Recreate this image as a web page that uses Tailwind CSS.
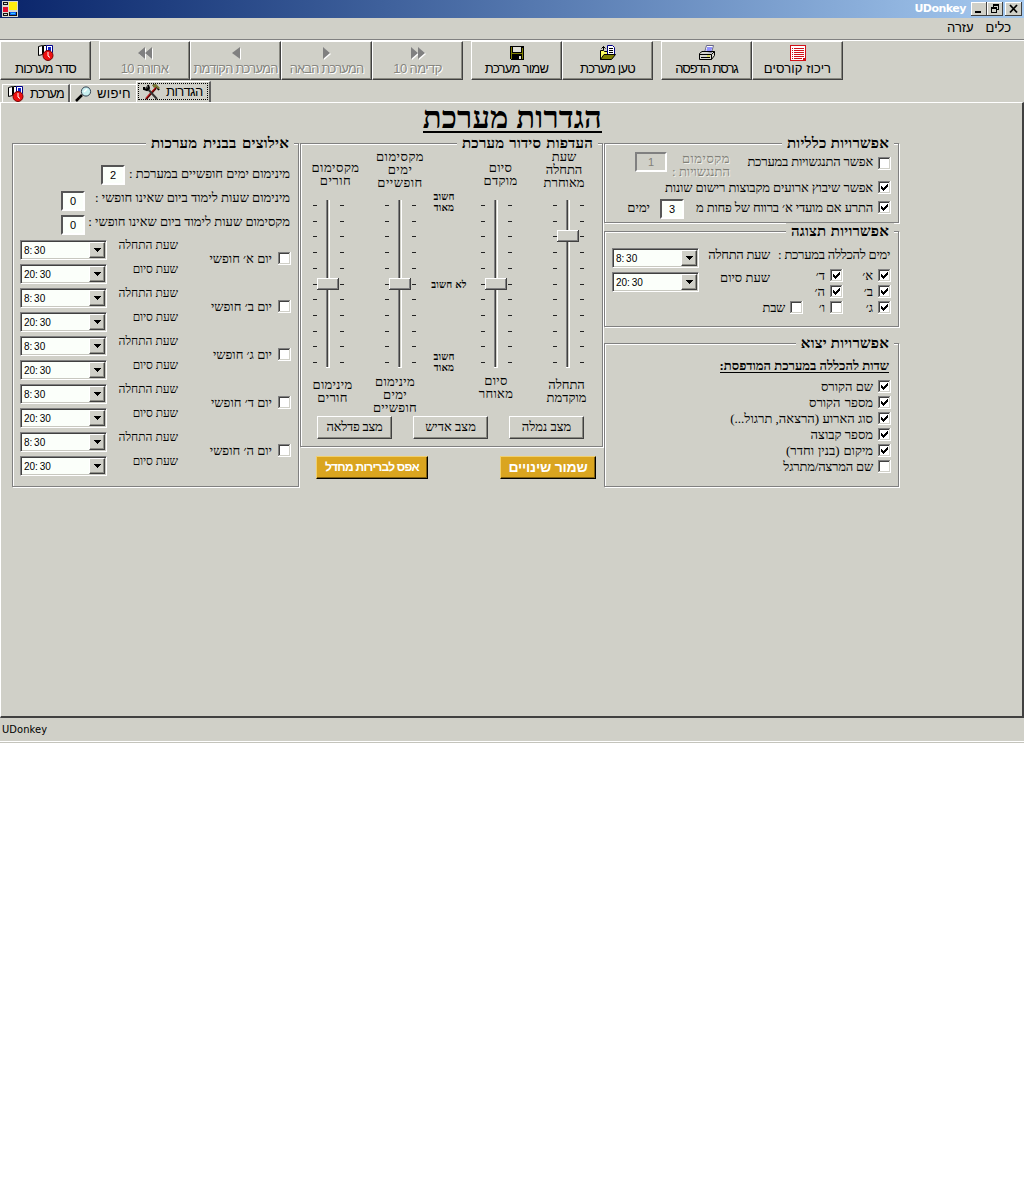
<!DOCTYPE html>
<html lang="he">
<head>
<meta charset="utf-8">
<title>UDonkey</title>
<script src="https://cdn.jsdelivr.net/npm/@tailwindcss/browser@4"></script>
<script>
// Drop-down list: <x-combo v="8:30">
customElements.define('x-combo', class extends HTMLElement {
  connectedCallback() {
    this.classList.add('block', 'shrink-0', 'w-[87px]', 'h-5');
    this.innerHTML = `<div dir="ltr" class="flex w-full h-full border border-t-[#808080] border-l-[#808080] border-b-white border-r-white bg-[#fbfffa] shadow-[inset_1px_1px_0_#404040,inset_-1px_-1px_0_#c8c8c0] p-[1px] pl-[3px] font-['Liberation_Sans'] text-[10px] leading-[17px] text-black">
      <span class="flex-1 [word-spacing:-1px]">${this.getAttribute('v')}</span>
      <span class="flex w-4 h-4 items-center justify-center bg-[#d0d0c8] border border-t-white border-l-white border-b-[#404040] border-r-[#404040] shadow-[inset_-1px_-1px_0_#909088]"><svg class="w-[7px] h-1" viewBox="0 0 7 4" shape-rendering="crispEdges"><path d="M0 0h7v1H6v1H5v1H4v1H3V3H2V2H1V1H0z"/></svg></span></div>`;
  }
});
// Check box: <x-check on>
customElements.define('x-check', class extends HTMLElement {
  connectedCallback() {
    this.classList.add('block', 'shrink-0', 'w-[13px]', 'h-[13px]');
    this.innerHTML = `<svg class="block w-[13px] h-[13px]" viewBox="0 0 13 13" shape-rendering="crispEdges"><path fill="#fff" d="M0 0h13v13H0z"/><path fill="#808080" d="M0 0h12v1H1v11H0z"/><path fill="#404040" d="M1 1h10v1H2v9H1z"/><path fill="#d0d0c8" d="M11 1h1v11H1v-1h10z"/>${this.hasAttribute('on') ? '<path d="M3 5h1v1h1v1h1V6h1V5h1V4h1V3h1v3H9v1H8v1H7v1H6v1H5V9H4V8H3z"/>' : ''}</svg>`;
  }
});
// Vertical slider: <x-slider pos="5">, pos counts tick marks from the top
customElements.define('x-slider', class extends HTMLElement {
  connectedCallback() {
    const y = n => Math.round(5 + n * 15.7);
    let ticks = '';
    for (let i = 0; i < 11; i++) ticks += `M1 ${y(i)}h4v1h-4zM28 ${y(i)}h4v1h-4z`;
    const t = y(+this.getAttribute('pos')) - 6;
    this.innerHTML = `<svg class="block w-[33px] h-[168px]" viewBox="0 0 33 168" shape-rendering="crispEdges"><path fill="#222" d="${ticks}"/><path fill="#808080" d="M14 0h1v167h-1z"/><path fill="#404040" d="M15 0h1v167h-1z"/><path fill="#fff" d="M17 0h1v168h-4v-1h3z"/><path fill="#404040" d="M5 ${t}h22v12H5z"/><path fill="#fff" d="M5 ${t}h21v11H5z"/><path fill="#808080" d="M6 ${t + 1}h20v10H6z"/><path fill="#d0d0c8" d="M6 ${t + 1}h19v9H6z"/></svg>`;
  }
});
</script>
</head>
<body class="bg-white">
<svg class="hidden">
  <symbol id="timetable" viewBox="0 0 16 16"><path fill="#fff" stroke="#000" d="M.5 1.500 4.500.5v9l-4 1zM5.500.5h3v8h-3z"/><path fill="#fff" stroke="#008" d="M8.500.5h6v7h-6z"/><path fill="#12c" d="M10 2h3v4h-3z"/><circle cx="10" cy="10.500" r="5" fill="#f01010" stroke="#700"/><path d="M10 7v4l2 1.500" fill="none" stroke="#fff"/></symbol>
</svg>
<div class="flex flex-col w-[1024px] h-[743px] bg-[#d0d0c8] text-black overflow-hidden font-['Liberation_Serif',serif]">
  <header class="flex h-[18px] shrink-0 items-center justify-between bg-linear-to-r from-[#0a246a] to-[#a6caf0] pl-[2px] pr-[2px]">
    <svg class="w-4 h-4" viewBox="0 0 16 16" shape-rendering="crispEdges"><path fill="#d8d8d0" d="M0 0h16v16H0z"/><path fill="#111" d="M1 1h5v3H1zM1 12h5v3H1zM7 11h8v4H7z"/><path fill="#d8d8d0" d="M2 2h3v1H2zM2 13h3v1H2z"/><path fill="#e01030" d="M1 6h5v5H1z"/><path fill="#ffee10" d="M7 1h8v8H7z"/><path fill="#1060f0" d="M8 11h6v3H8z"/><path fill="#30d0ff" d="M9 12h4v1H9z"/></svg>
    <div class="flex items-center">
      <span class="mr-[5px] text-[11px] font-bold text-white font-['DejaVu_Sans'] tracking-[-0.5px]">UDonkey</span>
      <svg class="w-[51px] h-[14px]" viewBox="0 0 51 14" shape-rendering="crispEdges"><path fill="#404040" d="M0 0h16v14H0zM16 0h16v14H16zM34 0h17v14H34z"/><path fill="#fff" d="M0 0h15v13H0zM16 0h15v13H16zM34 0h16v13H34z"/><path fill="#d0d0c8" d="M1 1h14v12H1zM17 1h14v12H17zM35 1h15v12H35z"/><path d="M4 9h6v2H4zM22 2h6v6h-2V7h1V4h-4v1h-1zM20 5h6v6h-6z"/><path fill="#d0d0c8" d="M21 7h4v3h-4z"/><path stroke="#000" stroke-width="1.800" shape-rendering="auto" d="m39 3 7 7.500M46 3l-7 7.500"/></svg>
    </div>
  </header>
  <nav dir="rtl" class="flex h-[22px] shrink-0 items-center gap-3 border-b border-[#808080] pr-[13px] pb-px text-[13px] font-['Liberation_Sans']">
    <span>כלים</span><span>עזרה</span>
  </nav>
  <div class="flex h-[41px] shrink-0 border-t border-white font-['Liberation_Sans'] text-[13px] leading-4 [&>button]:flex [&>button]:flex-col [&>button]:items-center [&>button]:w-[91px] [&>button]:h-[39px] [&>button]:pt-[3px] [&>button]:border [&>button]:border-t-white [&>button]:border-l-white [&>button]:border-b-[#404040] [&>button]:border-r-[#404040] [&>button]:shadow-[inset_-1px_-1px_0_#888880] [&>button]:whitespace-nowrap [&_svg]:w-4 [&_svg]:h-4">
    <button><svg><use href="#timetable"/></svg><span class="tracking-[-0.75px]">סדר מערכות</span></button>
    <button class="ml-2 text-[#85857f] [text-shadow:1px_1px_0_#fff]"><svg viewBox="0 0 16 16" fill="#808080"><path fill="#fff" d="M9 3v12L2 9zM16 3v12L9 9z"/><path d="M8 2v12L1 8zM15 2v12L8 8z"/></svg><span dir="rtl" class="tracking-[-0.7px]">אחורה 10</span></button>
    <button class="text-[#85857f] [text-shadow:1px_1px_0_#fff]"><svg viewBox="0 0 16 16" fill="#808080"><path fill="#fff" d="M13 3v12L6 9z"/><path d="M12 2v12L4 8z"/></svg><span class="tracking-[-0.8px]">המערכת הקודמת</span></button>
    <button class="text-[#85857f] [text-shadow:1px_1px_0_#fff]"><svg viewBox="0 0 16 16" fill="#808080"><path fill="#fff" d="M5 3v12l7-6z"/><path d="M4 2v12l7-6z"/></svg><span class="tracking-[-0.85px]">המערכת הבאה</span></button>
    <button class="text-[#85857f] [text-shadow:1px_1px_0_#fff]"><svg viewBox="0 0 16 16" fill="#808080"><path fill="#fff" d="M2 3v12l7-6zM9 3v12l7-6z"/><path d="M1 2v12l7-6zM8 2v12l7-6z"/></svg><span dir="rtl" class="tracking-[-0.6px]">קדימה 10</span></button>
    <button class="ml-2"><svg viewBox="0 0 16 16" shape-rendering="crispEdges"><path d="M1 1h14v14H2v-1H1z"/><path fill="#808000" d="M2 2h1v12H2zM13 3h1v11h-1zM3 8h10v1H3z"/><path fill="#e0e0d8" d="M4 2h8v5H4zM10 11h2v3h-2z"/></svg><span class="tracking-[-0.75px]">שמור מערכת</span></button>
    <button><svg viewBox="0 0 16 16"><path fill="#ffff60" stroke="#000" d="M.5 14.500v-9h3l1 1h5v8z"/><path fill="#fff" stroke="#008" d="M7.500.5h5l2 2v8h-7z"/><path stroke="#000" d="M9 3.500h4M9 5.500h4M9 7.500h4"/><path fill="#808000" stroke="#000" d="M.5 14.500 4 9.500h11.500l-4 5z"/><path fill="none" stroke="#000" d="M3.500 5V1.500M1.500 3.500l2-2 2 2"/></svg><span class="tracking-[-0.75px]">טען מערכת</span></button>
    <button class="ml-2"><svg viewBox="0 0 16 16"><path fill="#fff" stroke="#668" d="M5.500 7.500 7.500.5h7l-2 7z"/><path stroke="#22f" d="M8 3h5M7.500 5h5"/><path fill="#d8d8d0" stroke="#000" d="M.5 8.500 3 6.500h12.500v4l-3 4H.5zM.5 9.500h12l3-3M12.500 9.500v5"/><path stroke="#000" d="M2 12.500h9"/><path stroke="#dd0" d="M8 11h3"/></svg><span class="tracking-[-1px]">גרסת הדפסה</span></button>
    <button><svg viewBox="0 0 16 16" shape-rendering="crispEdges"><path fill="#d01018" d="M0 0h16v16H0z"/><path fill="#fff" d="M1 1h14v14H1z"/><path fill="#d01018" d="M2 3h1v1H2zM4 3h10v1H4zM2 5h1v1H2zM4 5h10v1H4zM2 7h1v1H2zM4 7h10v1H4zM2 9h1v1H2zM4 9h10v1H4zM2 11h1v1H2zM4 11h10v1H4zM2 13h1v1H2zM4 13h8v1H4zM13 13h2v2h-2z"/></svg><span class="tracking-[0.1px]">ריכוז קורסים</span></button>
  </div>
  <div class="flex h-[21px] shrink-0 items-end pl-[2px] text-[13px] font-['Liberation_Sans']">
    <div class="flex h-[18px] w-[68px] items-center gap-[6px] border-t border-l border-white border-r-2 border-r-[#606060] pl-[5px]"><svg class="w-4 h-4 shrink-0"><use href="#timetable"/></svg><span class="tracking-[-1px]">מערכת</span></div>
    <div class="flex h-[18px] w-[66px] items-center gap-[5px] border-t border-l border-white pl-1"><svg class="w-[17px] h-4" viewBox="0 0 17 16"><path stroke="#000" stroke-width="2.500" d="m1 15 6-6"/><circle cx="11" cy="5.500" r="4.600" fill="#c8f0f0" stroke="#345"/><path stroke="#fff" stroke-width="1.500" d="m9 6 3-3"/></svg><span class="tracking-[0.3px]">חיפוש</span></div>
    <div class="flex h-[21px] w-[75px] border-t border-l border-white border-r-2 border-r-[#606060] p-[1px]"><div class="flex w-full h-[17px] items-center gap-[6px] border border-dotted border-black pl-1"><svg class="w-[17px] h-4" viewBox="0 0 17 16"><path stroke="#500" stroke-width="2" d="M3 15 13 4"/><path stroke="#e02020" d="M3 14 13 3"/><path stroke="#333" stroke-width="2" d="m3 3 11 12"/><path fill="none" stroke="#000" stroke-width="2" d="M1 3v2l3 1 2-2-1-3M10 1l3 1 3 4"/><path fill="#773" d="m9 1 4-1 4 4-2 1-2-2-2 1z"/></svg><span class="tracking-[-0.6px]">הגדרות</span></div></div>
  </div>
  <main class="h-[616px] shrink-0 border-t border-l border-white border-r-2 border-r-[#404040] border-b-2 border-b-[#404040] text-[13px] leading-[13px] whitespace-nowrap">
    <h1 dir="rtl" class="ml-[422px] mt-[1px] w-[179px] h-[29px] border-b-2 border-black text-[31px] leading-[28px] font-bold [text-align-last:justify] tracking-[0.1px]">הגדרות מערכת</h1>
    <div class="flex gap-px items-start pl-[11px] mt-[10px] [&_section]:relative [&_section]:border [&_section]:border-[#808080] [&_section]:shadow-[1px_1px_0_#fff,inset_1px_1px_0_#fff] [&_h2]:absolute [&_h2]:-top-[9px] [&_h2]:right-[4px] [&_h2]:px-[5px] [&_h2]:bg-[#d0d0c8] [&_h2]:font-bold [&_h2]:text-[15px] [&_h2]:leading-[17px] [&_h2]:tracking-[0.2px] [&_h2]:[text-align-last:justify]">

      <section dir="rtl" class="w-[287px] h-[344px] pr-[8px] pl-[7px]">
        <h2 class="w-[148px]">אילוצים בבנית מערכות</h2>
        <div class="flex items-center h-5 mt-[21px]"><span class="w-[159px] [text-align-last:justify] -mt-[3px]">מינימום ימים חופשיים במערכת :</span><b class="mr-[6px] w-6 h-5 border-2 border-t-[#555] border-l-[#555] border-b-white border-r-white bg-[#fbfffa] text-center font-normal font-['Liberation_Sans'] text-[11px] leading-4">2</b></div>
        <div class="flex items-center h-5 mt-[6px]"><span class="w-[193px] [text-align-last:justify] -mt-2">מינימום שעות לימוד ביום שאינו חופשי :</span><b class="mr-[12px] w-6 h-5 border-2 border-t-[#555] border-l-[#555] border-b-white border-r-white bg-[#fbfffa] text-center font-normal font-['Liberation_Sans'] text-[11px] leading-4">0</b></div>
        <div class="flex items-center h-5 mt-1"><span class="w-[201px] [text-align-last:justify] -mt-2">מקסימום שעות לימוד ביום שאינו חופשי :</span><b class="mr-1 w-6 h-5 border-2 border-t-[#555] border-l-[#555] border-b-white border-r-white bg-[#fbfffa] text-center font-normal font-['Liberation_Sans'] text-[11px] leading-4">0</b></div>
        <div id="days" class="flex flex-col mt-[5px]"></div>
      </section>

      <div dir="rtl" class="w-[303px]">
        <section class="h-[304px]">
          <h2 class="w-[141px]">העדפות סידור מערכת</h2>
          <div dir="ltr" class="flex h-[268px] pt-[7px] text-center tracking-[0.3px]">
            <div class="w-[63px]"><p class="h-[49px] pt-[10px] pl-[6px] tracking-[0.5px]">מקסימום<br>חורים</p><x-slider pos="5" class="block ml-[11px]"></x-slider><p class="pt-[10px]">מינימום<br>חורים</p></div>
            <div class="w-[64px]"><p class="h-[49px] -mt-px mb-px pl-[8px] tracking-[0.5px]">מקסימום<br>ימים<br>חופשיים</p><x-slider pos="5" class="block ml-5"></x-slider><p class="pt-[7px] -ml-[2px]">מינימום<br>ימים<br>חופשיים</p></div>
            <div class="w-[42px] text-[10px] leading-[11px] font-bold tracking-[0.2px]"><p class="pt-[40px] pr-[10px]">חשוב<br>מאוד</p><p class="pt-[66px]">לא חשוב</p><p class="pt-[61px] pr-[10px]">חשוב<br>מאוד</p></div>
            <div class="w-[60px]"><p class="h-[49px] pt-[10px] pl-[1px]">סיום<br>מוקדם</p><x-slider pos="5" class="block ml-[10px]"></x-slider><p class="pt-[6px] pr-[8px]">סיום<br>מאוחר</p></div>
            <div class="w-[72px]"><p class="h-[49px] -mt-px mb-px pr-[4px] tracking-normal">שעת<br>התחלה<br>מאוחרת</p><x-slider pos="2" class="block ml-[22px]"></x-slider><p class="pt-[10px] pl-[1px] tracking-normal">התחלה<br>מוקדמת</p></div>
          </div>
          <div class="flex gap-[21px] pr-[18px] mt-1 [&>button]:w-[75px] [&>button]:h-[23px] [&>button]:pb-[3px] [&>button]:border [&>button]:border-t-white [&>button]:border-l-white [&>button]:border-b-[#404040] [&>button]:border-r-[#404040] [&>button]:shadow-[inset_-1px_-1px_0_#888880]">
            <button>מצב נמלה</button><button>מצב אדיש</button><button class="tracking-[-0.3px]">מצב פדלאה</button>
          </div>
        </section>
        <div class="flex justify-between pr-[7px] pl-4 mt-[9px] text-white font-bold font-['Liberation_Sans'] [&>button]:h-[23px] [&>button]:bg-[#daa520] [&>button]:border [&>button]:border-t-[#f0d070] [&>button]:border-l-[#f0d070] [&>button]:border-b-black [&>button]:border-r-black [&>button]:shadow-[inset_-1px_-1px_0_#806010]">
          <button class="w-24 text-[14px] tracking-[-0.2px]">שמור שינויים</button><button class="w-28 text-[12px] tracking-[-0.75px]">אפס לברירות מחדל</button>
        </div>
      </div>

      <div dir="rtl" class="w-[295px]">
        <section class="h-20 pr-[7px]">
          <h2 class="w-[112px]">אפשרויות כלליות</h2>
          <div class="flex h-[27px] pt-2">
            <x-check class="mt-[5px]"></x-check><span class="mr-[5px] mt-[3px] w-[125px] [text-align-last:justify] self-start tracking-[-0.2px]">אפשר התנגשויות במערכת</span>
            <p class="mr-[18px] w-[58px] text-[#808078] [text-shadow:1px_1px_0_#f0f0ea]"><span class="tracking-[0.5px]">מקסימום</span><br>התנגשויות :</p>
            <b class="mr-[5px] w-8 h-5 border-2 border-t-[#808080] border-l-[#808080] border-b-white border-r-white text-center text-[#808078] font-normal font-['Liberation_Sans'] text-[11px] leading-4">1</b>
          </div>
          <div class="flex items-center h-4 mt-2"><x-check on></x-check><span class="mr-[5px] w-[208px] [text-align-last:justify] tracking-[-0.15px]">אפשר שיבוץ ארועים מקבוצות רישום שונות</span></div>
          <div class="flex items-center h-5 mt-[2px]"><x-check on></x-check><span class="mr-[5px] w-[177px] [text-align-last:justify] tracking-[-0.2px]">התרע אם מועדי א׳ ברווח של פחות מ</span><b class="mr-3 mt-1 w-6 h-5 border-2 border-t-[#555] border-l-[#555] border-b-white border-r-white bg-[#fbfffa] text-center font-normal font-['Liberation_Sans'] text-[11px] leading-4">3</b><span class="mr-[10px]">ימים</span></div>
        </section>
        <section class="h-24 mt-2 flex pt-4 pr-2">
          <h2 class="w-[108px]">אפשרויות תצוגה</h2>
          <div class="w-[120px]">
            <p class="w-[112px] [text-align-last:justify] tracking-[-0.3px]">ימים להכללה במערכת :</p>
            <div class="grid grid-cols-[48px_40px_50px] -mr-px mt-[6px] [&>label]:flex [&>label]:h-4 [&>label]:items-center [&>label]:gap-[5px]">
              <label><x-check on></x-check>א׳</label><label class="col-span-2"><x-check on></x-check>ד׳</label>
              <label><x-check on></x-check>ב׳</label><label class="col-span-2"><x-check on></x-check>ה׳</label>
              <label><x-check on></x-check>ג׳</label><label><x-check></x-check>ו׳</label><label class="tracking-[-0.3px]"><x-check></x-check>שבת</label>
            </div>
          </div>
          <div class="w-[71px]"><p class="w-[61px] [text-align-last:justify] tracking-[-0.3px]">שעת התחלה</p><p class="mt-[10px]">שעת סיום</p></div>
          <div class="flex flex-col gap-1"><x-combo v="8:&nbsp;30"></x-combo><x-combo v="20:&nbsp;30"></x-combo></div>
        </section>
        <section class="h-36 mt-4 pt-4 pr-[7px]">
          <h2 class="w-[98px]">אפשרויות יצוא</h2>
          <h3 class="w-[169px] h-[13px] mr-[2px] font-bold text-[13px] leading-[11px] border-b border-black [text-align-last:justify]">שדות להכללה במערכת המודפסת:</h3>
          <div class="mt-[5px] [&>label]:flex [&>label]:h-4 [&>label]:items-center [&>label]:gap-[5px] [&_span]:[text-align-last:justify]">
            <label><x-check on></x-check><span class="w-[52px]">שם הקורס</span></label>
            <label><x-check on></x-check><span class="w-[64px]">מספר הקורס</span></label>
            <label><x-check on></x-check><span class="w-[141px]">סוג הארוע (הרצאה, תרגול...)</span></label>
            <label><x-check on></x-check><span class="w-[62px]">מספר קבוצה</span></label>
            <label><x-check on></x-check><span class="w-[87px]">מיקום (בנין וחדר)</span></label>
            <label><x-check></x-check><span class="w-[89px] tracking-[-0.2px]">שם המרצה/מתרגל</span></label>
          </div>
        </section>
      </div>
    </div>
  </main>
  <footer class="flex-1 pl-[2px] pt-[4px] border-b border-[#c4c4bc] shadow-[inset_0_-1px_0_#fff] text-[11px] leading-4 font-['DejaVu_Sans_Condensed','DejaVu_Sans'] tracking-[0.1px]">UDonkey</footer>
</div>
<script>
document.getElementById('days').innerHTML = ['א', 'ב', 'ג', 'ד', 'ה'].map(d => `
  <div class="flex h-12 -mr-[1px]">
    <label class="flex items-start gap-[6px] w-[113px]"><x-check class="mt-[12px]"></x-check><span class="mt-[12px]">יום ${d}׳ חופשי</span></label>
    <div class="w-[71px] leading-6 -mt-[7px]"><p class="w-[56px] text-[12px] [text-align-last:justify]">שעת התחלה</p><p class="w-[45px] text-[12px] tracking-[-0.1px]">שעת סיום</p></div>
    <div class="flex flex-col gap-1"><x-combo v="8:&nbsp;30"></x-combo><x-combo v="20:&nbsp;30"></x-combo></div>
  </div>`).join('');
</script>
</body>
</html>
